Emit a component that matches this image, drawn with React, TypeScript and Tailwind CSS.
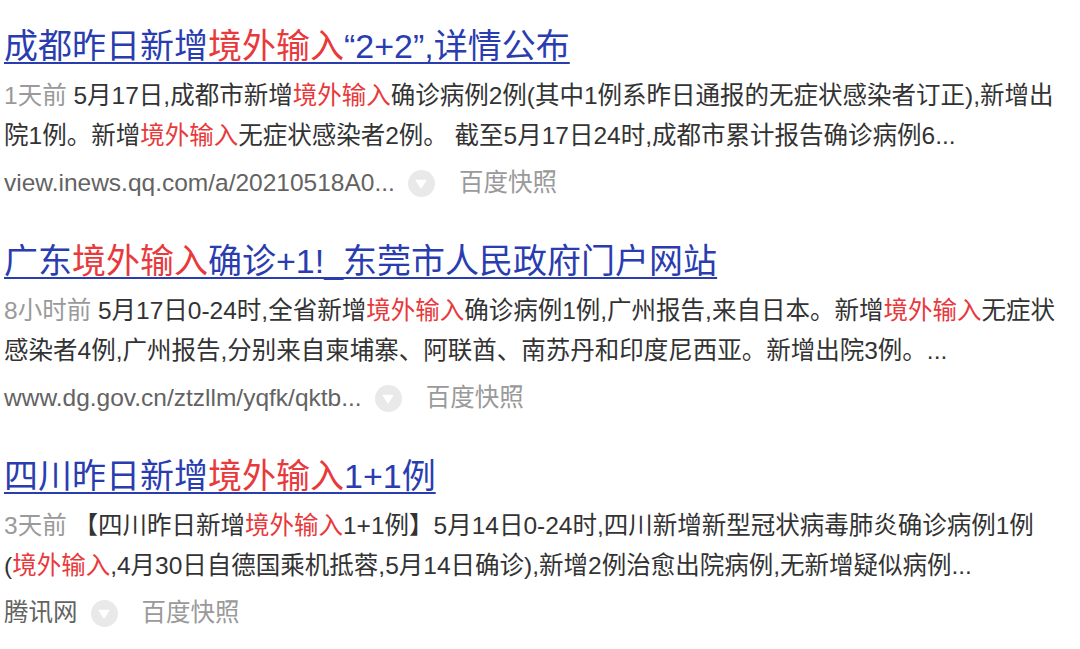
import React from "react";

type Part = { t: string; r?: boolean };

const R = ({ children }: { children: React.ReactNode }) => (
  <span className="text-[#e8393c]">{children}</span>
);

const Dot = () => (
  <span className="ml-[13px] flex h-[27px] w-[27px] items-center justify-center rounded-full bg-[#e9e9e9]">
    <svg width="12" height="10" viewBox="0 0 12 10" className="mt-[2px]">
      <path d="M1.5 1.5 L10.5 1.5 L6 8.5 Z" fill="#ffffff" stroke="#ffffff" strokeWidth="1.6" strokeLinejoin="round" />
    </svg>
  </span>
);

function Title({ parts }: { parts: Part[] }) {
  return (
    <div className="whitespace-nowrap text-[34px] leading-[48px] text-[#2a3db0] underline decoration-[1.5px] underline-offset-[4px] [text-decoration-skip-ink:none]">
      {parts.map((p, i) =>
        p.r ? (
          <span key={i} className="text-[#e8393c]">
            {p.t}
          </span>
        ) : (
          <span key={i}>{p.t}</span>
        )
      )}
    </div>
  );
}

function Source({ src }: { src: string }) {
  return (
    <div className="mt-[7px] flex h-[40px] items-center whitespace-nowrap text-[24.5px]">
      <span className="text-[#636363]">{src}</span>
      <Dot />
      <span className="ml-[24px] text-[#9a9a9a]">百度快照</span>
    </div>
  );
}

export default function App() {
  return (
    <div className="h-[649px] w-[1080px] overflow-hidden bg-white pl-1 pt-[22px] font-['Liberation_Sans','Noto_Sans_CJK_SC',sans-serif]">
      {/* Result 1 */}
      <div className="pb-[34px]">
        <Title
          parts={[
            { t: "成都昨日新增" },
            { t: "境外输入", r: true },
            { t: "“2+2”,详情公布" },
          ]}
        />
        <div className="mt-1.5 whitespace-nowrap text-[24.5px] leading-[40px] text-[#333333]">
          <div>
            <span className="text-[#9a9a9a]">1天前</span> 5月17日,成都市新增<R>境外输入</R>确诊病例2例(其中1例系昨日通报的无症状感染者订正),新增出
          </div>
          <div>
            院1例。新增<R>境外输入</R>无症状感染者2例。 截至5月17日24时,成都市累计报告确诊病例6...
          </div>
        </div>
        <Source src="view.inews.qq.com/a/20210518A0..." />
      </div>

      {/* Result 2 */}
      <div className="pb-[34px]">
        <Title
          parts={[
            { t: "广东" },
            { t: "境外输入", r: true },
            { t: "确诊+1!_东莞市人民政府门户网站" },
          ]}
        />
        <div className="mt-1.5 whitespace-nowrap text-[24.5px] leading-[40px] text-[#333333]">
          <div>
            <span className="text-[#9a9a9a]">8小时前</span> 5月17日0-24时,全省新增<R>境外输入</R>确诊病例1例,广州报告,来自日本。新增<R>境外输入</R>无症状
          </div>
          <div>感染者4例,广州报告,分别来自柬埔寨、阿联酋、南苏丹和印度尼西亚。新增出院3例。...</div>
        </div>
        <Source src="www.dg.gov.cn/ztzllm/yqfk/qktb..." />
      </div>

      {/* Result 3 */}
      <div className="pb-[34px]">
        <Title
          parts={[
            { t: "四川昨日新增" },
            { t: "境外输入", r: true },
            { t: "1+1例" },
          ]}
        />
        <div className="mt-1.5 whitespace-nowrap text-[24.5px] leading-[40px] text-[#333333]">
          <div>
            <span className="text-[#9a9a9a]">3天前</span> 【四川昨日新增<R>境外输入</R>1+1例】5月14日0-24时,四川新增新型冠状病毒肺炎确诊病例1例
          </div>
          <div>
            (<R>境外输入</R>,4月30日自德国乘机抵蓉,5月14日确诊),新增2例治愈出院病例,无新增疑似病例...
          </div>
        </div>
        <Source src="腾讯网" />
      </div>
    </div>
  );
}
